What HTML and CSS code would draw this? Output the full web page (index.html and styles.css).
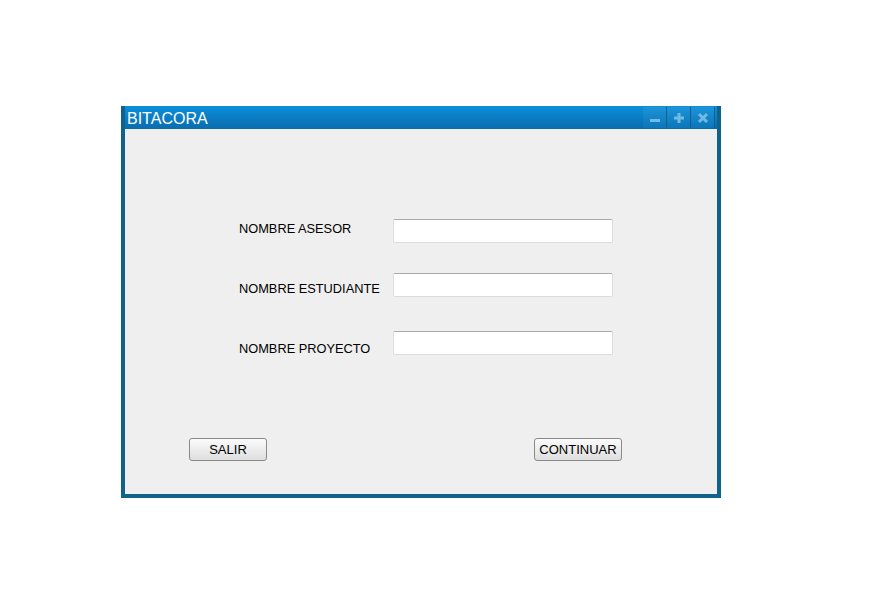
FILE: index.html
```html
<!DOCTYPE html>
<html>
<head>
<meta charset="utf-8">
<link rel="stylesheet" href="styles.css">
</head>
<body>
<div class="window">
  <div class="titlebar">
    <span class="title">BITACORA</span>
    <div class="controls">
      <div class="ctrl"><svg width="12" height="12" viewBox="0 0 12 12"><rect x="1" y="7" width="10" height="3" fill="#6fbbe6"/></svg></div>
      <div class="ctrl"><svg width="12" height="12" viewBox="0 0 12 12"><rect x="1" y="4.5" width="10" height="3" fill="#6fbbe6"/><rect x="4.5" y="1" width="3" height="10" fill="#6fbbe6"/></svg></div>
      <div class="ctrl"><svg width="12" height="12" viewBox="0 0 12 12"><path d="M2 2 L10 10 M10 2 L2 10" stroke="#6fbbe6" stroke-width="3"/></svg></div>
    </div>
  </div>
  <div class="content">
    <div class="form">
      <div class="row row1">
        <label class="lbl">NOMBRE ASESOR</label>
        <div class="input"></div>
      </div>
      <div class="row row2">
        <label class="lbl">NOMBRE ESTUDIANTE</label>
        <div class="input"></div>
      </div>
      <div class="row row3">
        <label class="lbl">NOMBRE PROYECTO</label>
        <div class="input"></div>
      </div>
    </div>
    <div class="actions">
      <button class="btn btn-salir">SALIR</button>
      <button class="btn btn-continuar">CONTINUAR</button>
    </div>
  </div>
</div>
</body>
</html>
```
FILE: styles.css
```css
html, body {
  margin: 0;
  padding: 0;
  background: #ffffff;
}
body {
  padding: 106px 0 0 121px;
  font-family: "Liberation Sans", Arial, sans-serif;
}
.window {
  width: 592px;
  border: 4px solid #11628b;
  border-top: 0;
  background: #efefef;
}
.titlebar {
  height: 23px;
  margin: 0 -4px;
  padding: 0 4px;
  background: linear-gradient(#0a8fdc, #0a6cad);
  display: flex;
  align-items: center;
  justify-content: space-between;
  box-shadow: inset 4px 0 0 #11628b, inset -4px 0 0 #11628b;
}
.title {
  color: #ffffff;
  font-size: 16px;
  padding-left: 2px;
  padding-top: 2px;
  line-height: 21px;
}
.controls {
  display: flex;
  align-self: stretch;
  padding: 1px 3px 1px 0;
  gap: 1px;
}
.ctrl {
  width: 23px;
  background: linear-gradient(#1d93d8, #0c76b8);
  display: flex;
  align-items: center;
  justify-content: center;
  box-shadow: 1px 0 0 #0b5f93;
}
.content {
  height: 365px;
  display: flex;
  flex-direction: column;
}
.form {
  margin-top: 90px;
  padding-left: 114px;
}
.row {
  display: flex;
  align-items: flex-start;
}
.row2 { margin-top: 30px; }
.row3 { margin-top: 34px; }
.lbl {
  width: 154px;
  font-size: 12.8px;
  line-height: 16px;
  color: #000;
}
.row1 .lbl { padding-top: 2px; }
.row2 .lbl { padding-top: 8px; }
.row3 .lbl { padding-top: 10px; }
.input {
  width: 218px;
  height: 22px;
  background: #fff;
  border: 1px solid #dcdcdc;
  border-top-color: #aaaaaa;
  border-radius: 2px;
}
.actions {
  margin-top: 81px;
  display: flex;
  justify-content: space-between;
  padding: 0 95px 0 64px;
}
.btn {
  height: 23px;
  padding: 0;
  border: 1px solid #8a8a8a;
  border-radius: 3px;
  background: linear-gradient(#fbfbfb, #dedede);
  font-family: "Liberation Sans", Arial, sans-serif;
  font-size: 13px;
  color: #000;
}
.btn-salir { width: 78px; }
.btn-continuar { width: 88px; }
```
